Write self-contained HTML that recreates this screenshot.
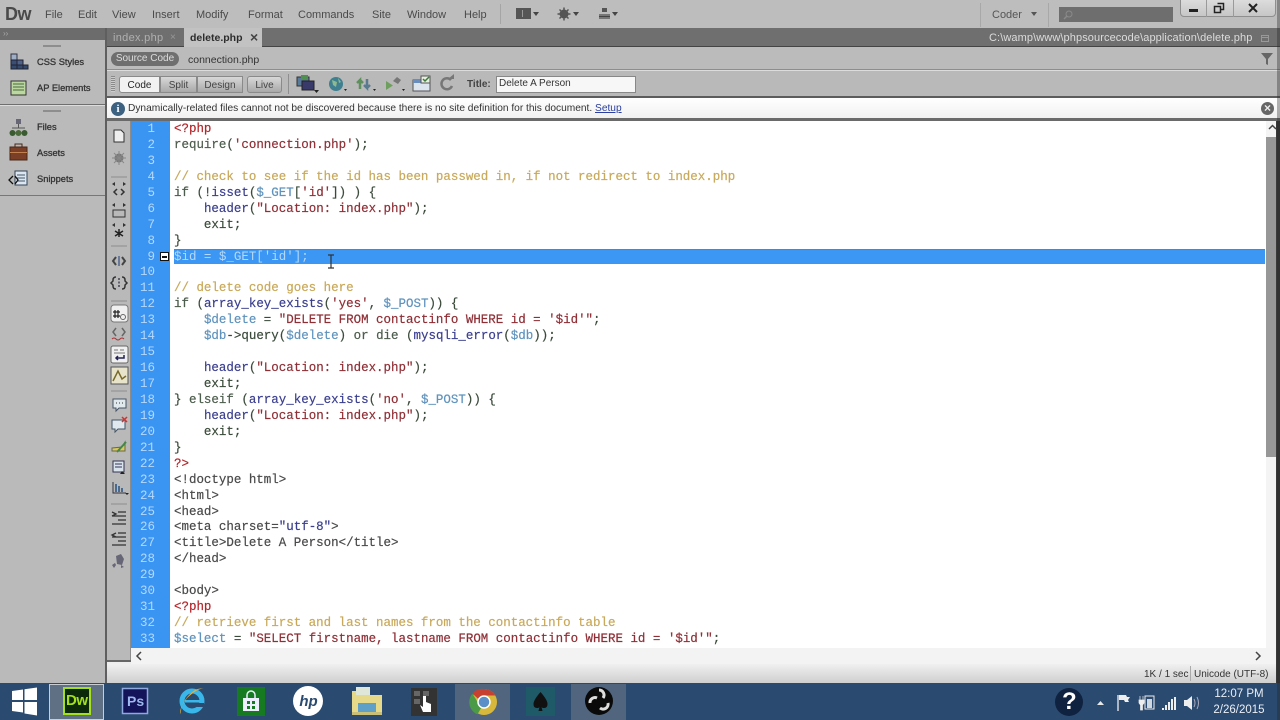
<!DOCTYPE html>
<html><head><meta charset="utf-8"><title>Dreamweaver</title>
<style>
html,body{margin:0;padding:0;width:1280px;height:720px;overflow:hidden;background:#bcbcbc}
#w{position:relative;width:1280px;height:720px;overflow:hidden;font-family:"Liberation Sans",sans-serif;font-size:11px;color:#333;filter:blur(.35px)}
#w div,#w span.a,#w svg{position:absolute}
.m{top:8px;font-size:11px;color:#4a4a4a;line-height:14px;white-space:nowrap}
.p{left:37px;font-size:9.300px;color:#333;line-height:12px;white-space:nowrap;-webkit-text-stroke:.3px #333}
#code{left:174px;top:122px;font:12.48px/15.94px "Liberation Mono",monospace;white-space:pre;color:#3a4a3a;-webkit-text-stroke:.2px}
#nums{left:131px;top:122px;width:24px;text-align:right;font:12.48px/15.94px "Liberation Mono",monospace;color:#b5d8fb;white-space:pre}
.c{color:#c9a95a}.s{color:#8f2f36}.f{color:#3b3f8f}.v{color:#5f93bd}.r{color:#b3262b}.t{color:#4a4a4a}.k{color:#4d5d4d}
.b{top:76px;height:17px;line-height:17px;text-align:center;font-size:10px;color:#444;background:linear-gradient(#d8d8d8,#a9a9a9);border:1px solid #8a8a8a;box-sizing:border-box}
</style></head><body><div id="w">

<!-- title bar -->
<div style="left:0;top:0;width:1280px;height:28px;background:#bdbdbd"></div>
<div style="left:5px;top:2px;font-size:18px;font-weight:bold;color:#4a4a4a;line-height:24px;letter-spacing:-.5px">Dw</div>
<div class="m" style="left:45px">File</div><div class="m" style="left:78px">Edit</div><div class="m" style="left:112px">View</div>
<div class="m" style="left:152px">Insert</div><div class="m" style="left:196px">Modify</div><div class="m" style="left:248px">Format</div>
<div class="m" style="left:298px">Commands</div><div class="m" style="left:372px">Site</div><div class="m" style="left:407px">Window</div><div class="m" style="left:464px">Help</div>
<div style="left:500px;top:4px;width:1px;height:20px;background:#a5a5a5"></div>
<svg style="left:514px;top:6px" width="110" height="16" viewBox="0 0 110 16">
<rect x="2" y="2" width="15" height="11" fill="#555"/><rect x="8" y="4" width="1" height="7" fill="#999"/>
<path d="M19 6h6l-3 4z" fill="#444"/>
<circle cx="50" cy="8" r="4.500" fill="#555"/><circle cx="50" cy="8" r="1.700" fill="#bbb"/><path d="M50 1.500v13M43.500 8h13M45.500 3.500l9 9M54.500 3.500l-9 9" stroke="#555" stroke-width="1.500"/>
<path d="M59 6h6l-3 4z" fill="#444"/>
<rect x="88" y="2" width="5" height="4" fill="#555"/><path d="M85 8h11v5H85z" fill="#777"/><path d="M85 10.500h11" stroke="#444"/>
<path d="M98 6h6l-3 4z" fill="#444"/>
</svg>
<div style="left:980px;top:3px;width:1px;height:24px;background:#a8a8a8"></div>
<div style="left:1048px;top:3px;width:1px;height:24px;background:#a8a8a8"></div>
<div class="m" style="left:992px;color:#555">Coder</div>
<svg style="left:1030px;top:11px" width="8" height="6"><path d="M1 1h6L4 5z" fill="#555"/></svg>
<div style="left:1059px;top:7px;width:114px;height:15px;background:#6e6e6e"></div>
<svg style="left:1062px;top:9px" width="12" height="12"><circle cx="7" cy="5" r="3" fill="none" stroke="#8a8a8a"/><path d="M5 7l-3 3" stroke="#8a8a8a" stroke-width="1.500"/></svg>
<div style="left:1180px;top:-1px;width:96px;height:18px;background:linear-gradient(#dcdcdc,#c6c6c6);border:1px solid #8f8f8f;border-radius:0 0 4px 4px;box-sizing:border-box"></div>
<div style="left:1206px;top:0;width:1px;height:17px;background:#9a9a9a"></div>
<div style="left:1233px;top:0;width:1px;height:17px;background:#9a9a9a"></div>
<svg style="left:1180px;top:0" width="96" height="17">
<rect x="9" y="9" width="9" height="3" fill="#222"/>
<path d="M34.500 6.500h6v6h-6zM37.500 3.500h6v6h-3" fill="none" stroke="#222" stroke-width="1.500"/>
<path d="M69 4l8 8M77 4l-8 8" stroke="#222" stroke-width="2"/>
</svg>

<!-- left panel -->
<div style="left:0;top:28px;width:106px;height:655px;background:#bababa"></div>
<div style="left:0;top:28px;width:105px;height:12px;background:#6c6c6c"></div>
<div style="left:3px;top:29px;font-size:8px;line-height:9px;color:#aaa">››</div>
<div style="left:43px;top:45px;width:18px;height:2px;background:#8d8d8d"></div>
<div style="left:43px;top:110px;width:18px;height:2px;background:#8d8d8d"></div>
<div style="left:0;top:104px;width:105px;height:1px;background:#6f6f6f"></div>
<div style="left:0;top:105px;width:105px;height:1px;background:#ddd"></div>
<div style="left:0;top:195px;width:105px;height:1px;background:#777"></div>
<div class="p" style="top:56px">CSS Styles</div><div class="p" style="top:82px">AP Elements</div>
<div class="p" style="top:121px">Files</div><div class="p" style="top:147px">Assets</div><div class="p" style="top:173px">Snippets</div>
<svg style="left:8px;top:51px" width="22" height="140" viewBox="0 0 22 140">
<rect x="3" y="3" width="6" height="6" fill="#9fb0c6" stroke="#334"/><rect x="3" y="9" width="6" height="5" fill="#3a4f74" stroke="#223"/><rect x="9" y="9" width="6" height="5" fill="#4d6388" stroke="#223"/><rect x="3" y="14" width="6" height="4" fill="#334a6c" stroke="#223"/><rect x="9" y="14" width="6" height="4" fill="#334a6c" stroke="#223"/><rect x="15" y="14" width="5" height="4" fill="#334a6c" stroke="#223"/>
<rect x="3" y="30" width="15" height="14" fill="#bcd8a0" stroke="#333"/><path d="M5 33h11M5 36h11M5 39h11" stroke="#4a6a40"/>
<rect x="8" y="68" width="5" height="5" fill="#667"/><path d="M10.500 73v4M4 77h13" stroke="#555"/><circle cx="4.500" cy="82" r="3" fill="#3a5a30"/><circle cx="10.500" cy="82" r="3" fill="#4a6a3a"/><circle cx="16.500" cy="82" r="3" fill="#3a5a30"/>
<rect x="2" y="96" width="17" height="13" fill="#7b3f28" stroke="#4a2818"/><rect x="7" y="93" width="7" height="3" fill="none" stroke="#4a2818"/><rect x="2" y="101" width="17" height="1" fill="#c08050"/>
<rect x="7" y="120" width="12" height="14" fill="#dce6f2" stroke="#345"/><path d="M9 124h8M9 127h8M9 130h8" stroke="#456"/><path d="M5 125l-4 4 4 4M7 125l3 4-3 4" fill="none" stroke="#111" stroke-width="1.300"/>
</svg>
<div style="left:105px;top:28px;width:2px;height:655px;background:#5f5f5f"></div>

<!-- tabs bar -->
<div style="left:107px;top:28px;width:1173px;height:19px;background:#6f6f6f;border-bottom:1px solid #444;box-sizing:border-box"></div>
<div style="left:113px;top:31px;font-size:11px;line-height:14px;color:#b0b0b0;letter-spacing:.3px">index.php</div>
<div style="left:170px;top:31px;font-size:10px;line-height:14px;color:#999">×</div>
<div style="left:184px;top:28px;width:78px;height:19px;background:#c2c2c2"></div>
<div style="left:190px;top:31px;font-size:10.500px;line-height:14px;color:#2c2c2c;font-weight:bold">delete.php</div>
<div style="left:250px;top:30px;font-size:14px;line-height:14px;color:#444;font-weight:bold">×</div>
<div style="left:989px;top:31px;font-size:11px;line-height:14px;color:#dcdcdc;white-space:nowrap;letter-spacing:.1px">C:\wamp\www\phpsourcecode\application\delete.php</div>
<svg style="left:1259px;top:32px" width="12" height="12"><rect x="2.500" y="3.500" width="7" height="6" fill="none" stroke="#999"/><path d="M2 5.500h8" stroke="#999"/></svg>

<!-- related files row -->
<div style="left:107px;top:47px;width:1173px;height:23px;background:#bbb"></div>
<div style="left:107px;top:69px;width:1173px;height:1px;background:#8d8d8d"></div>
<div style="left:107px;top:70px;width:1173px;height:1px;background:#dcdcdc"></div>
<div style="left:111px;top:52px;width:68px;height:14px;border-radius:7px;background:#6f6f6f;color:#ddd;font-size:10px;line-height:14px;text-align:center">Source Code</div>
<div style="left:188px;top:53px;font-size:10.500px;line-height:14px;color:#333">connection.php</div>
<svg style="left:1260px;top:52px" width="14" height="14"><path d="M1 1h12L8 7v6L6 12V7z" fill="#666"/></svg>

<!-- toolbar -->
<div style="left:107px;top:71px;width:1173px;height:26px;background:#b9b9b9"></div>
<div style="left:107px;top:96px;width:1173px;height:2px;background:#5c5c5c"></div>
<div style="left:111px;top:76px;width:4px;height:16px;background:repeating-linear-gradient(#8a8a8a 0 1px,#ccc 1px 2px)"></div>
<div class="b" style="left:119px;width:41px;background:#f2f2f2;color:#222;border-radius:3px 0 0 3px">Code</div>
<div class="b" style="left:160px;width:37px;">Split</div>
<div class="b" style="left:197px;width:46px;">Design</div>
<div class="b" style="left:247px;width:35px;border-radius:3px">Live</div>
<div style="left:288px;top:74px;width:1px;height:20px;background:#8f8f8f"></div>
<svg style="left:294px;top:73px" width="170" height="22" viewBox="0 0 170 22">
<rect x="3" y="4" width="12" height="9" fill="#5a7a9a" stroke="#333"/><rect x="8" y="8" width="12" height="9" fill="#3a3a6a" stroke="#222"/><rect x="7" y="2" width="7" height="5" fill="#4f8f4f"/><path d="M20 17h5l-2.500 3z" fill="#222"/>
<circle cx="42" cy="11" r="7" fill="#3f7f8f"/><path d="M38 7l5 2-1 5-3-2zM44 5l3 4-2 1z" fill="#8fb98f"/><path d="M50 16h3l-1.500 2z" fill="#222"/>
<path d="M66 16V7l-3 3M66 7l3 3" stroke="#5f8f5f" stroke-width="2.500" fill="none"/><path d="M73 6v9l-3-3M73 15l3-3" stroke="#5a7a8f" stroke-width="2.500" fill="none"/><path d="M79 16h3l-1.500 2z" fill="#222"/>
<path d="M92 8v9l7-4.500z" fill="#6f9f5f"/><path d="M99 8l4-4 4 3-3 4z" fill="#777"/><path d="M108 16h3l-1.500 2z" fill="#222"/>
<rect x="119" y="7" width="17" height="11" fill="#dce4ee" stroke="#555"/><rect x="119" y="7" width="17" height="3" fill="#6a8fbf"/><rect x="127" y="3" width="9" height="7" fill="#e8eee0" stroke="#555"/><path d="M129 6l2 2 4-4" stroke="#3a7a3a" fill="none" stroke-width="1.500"/>
<path d="M157 7a5.500 5.500 0 1 0 1 6" fill="none" stroke="#777" stroke-width="2.500"/><path d="M154 6h6V1z" fill="#777"/>
</svg>
<div style="left:467px;top:78px;font-size:10px;font-weight:bold;line-height:14px;color:#444">Title:</div>
<div style="left:496px;top:76px;width:140px;height:17px;background:#f7f7f7;border:1px solid #888;box-sizing:border-box;font-size:10px;line-height:14px;padding:0 0 0 2px;color:#333">Delete A Person</div>

<!-- info bar -->
<div style="left:107px;top:98px;width:1173px;height:21px;background:linear-gradient(#fff,#f0f0f0)"></div>
<div style="left:107px;top:118px;width:1173px;height:3px;background:#6a6a6a"></div>
<div style="left:111px;top:102px;width:14px;height:14px;border-radius:7px;background:#3d6180;color:#fff;font:bold 11px/14px 'Liberation Serif',serif;text-align:center">i</div>
<div style="left:128px;top:102px;font-size:10.190px;line-height:13px;color:#333;white-space:nowrap">Dynamically-related files cannot not be discovered because there is no site definition for this document. <span style="color:#2a3fa0;text-decoration:underline">Setup</span></div>
<div style="left:1261px;top:102px;width:13px;height:13px;border-radius:7px;background:#666;color:#eee;font:bold 12px/13px 'Liberation Sans',sans-serif;text-align:center">×</div>

<!-- code view column -->
<div style="left:107px;top:121px;width:24px;height:539px;background:#b9b9b9"></div>
<div style="left:107px;top:660px;width:24px;height:2px;background:#666"></div>
<div style="left:130px;top:121px;width:1px;height:539px;background:#8c8c8c"></div>
<svg style="left:107px;top:124px" width="24" height="450" viewBox="0 0 24 450">
<path d="M7 6h7l3 3v9H7z" fill="#eee" stroke="#333"/>
<circle cx="12" cy="34" r="4.500" fill="#777"/><path d="M12 27v14M5 34h14M7 29l10 10M17 29L7 39" stroke="#888"/>
<path d="M4 53h16" stroke="#8d8d8d"/>
<g transform="translate(0 -2)"><path d="M5 62l3-2v4zM19 62l-3-2v4z" fill="#333"/><path d="M10 67l-3 3 3 3M14 67l3 3-3 3" fill="none" stroke="#333" stroke-width="1.500"/></g>
<path d="M5 81l3-2v4zM19 81l-3-2v4z" fill="#333"/><rect x="6" y="86" width="12" height="7" fill="none" stroke="#333"/>
<path d="M5 101l3-2v4zM19 101l-3-2v4z" fill="#333"/><path d="M12 105v8M8 107l8 5M16 107l-8 5" stroke="#222" stroke-width="1.500"/>
<path d="M4 122h16" stroke="#8d8d8d"/>
<g transform="translate(0 3)"><path d="M9 130l-3 4 3 4M15 130l3 4-3 4" fill="none" stroke="#444" stroke-width="2"/><path d="M12 129v10" stroke="#6a7a9a" stroke-width="2"/></g>
<path d="M9 153q-3 0-3 3v1l-2 2 2 2v1q0 3 3 3M15 153q3 0 3 3v1l2 2-2 2v1q0 3-3 3" fill="none" stroke="#333" stroke-width="1.500"/><path d="M12 154v10" stroke="#445" stroke-dasharray="2 1.500" stroke-width="1.500"/>
<path d="M4 177h16" stroke="#8d8d8d"/>
<rect x="4" y="181" width="17" height="17" rx="3" fill="#f0f0f0" stroke="#777"/><path d="M8 186v8M11 186v8M6 188h7M6 192h7" stroke="#222" stroke-width="1.200"/><circle cx="16" cy="193" r="2.500" fill="none" stroke="#666"/>
<path d="M9 204l-3 4 3 4M15 204l3 4-3 4" fill="none" stroke="#666" stroke-width="1.500"/><path d="M5 215q2-2 4 0t4 0 4 0" fill="none" stroke="#a33"/>
<rect x="4" y="222" width="17" height="17" rx="2" fill="#f0f0f0" stroke="#666"/><path d="M7 226h4M13 226h4M7 229h11" stroke="#777"/><path d="M17 231v3h-8m2-2l-2 2 2 2" fill="none" stroke="#225" stroke-width="1.500"/>
<rect x="4" y="243" width="17" height="17" fill="#e8e4cc" stroke="#555"/><path d="M6 257l5-10 4 8 4-3" fill="none" stroke="#776a2a" stroke-width="1.500"/>
<path d="M4 267h16" stroke="#8d8d8d"/>
<path d="M6 275h13v9h-7l-3 3v-3H6z" fill="#dfe9ee" stroke="#456"/><path d="M9 279h1M12 279h1M15 279h1" stroke="#333"/>
<path d="M5 296h13v9h-7l-3 3v-3H5z" fill="#dfe9ee" stroke="#456"/><path d="M15 293l5 5M20 293l-5 5" stroke="#c33" stroke-width="1.500"/>
<g transform="translate(0 6)"><path d="M5 318l10-1 3-5v9H5z" fill="#d9c95a" stroke="#665"/><path d="M10 322l9-10" stroke="#484" stroke-width="2"/></g>
<g transform="translate(0 2)"><rect x="6" y="335" width="11" height="11" fill="#d9e3ee" stroke="#335"/><path d="M8 338h7M8 341h7" stroke="#335"/><path d="M15 345l3 3h-5z" fill="#222"/></g>
<path d="M6 358v11h13" fill="none" stroke="#334"/><path d="M9 368v-8M12 368v-6M15 368v-4" stroke="#4a6a8f" stroke-width="2"/><path d="M18 369h4l-2 2z" fill="#222"/>
<path d="M4 380h16" stroke="#8d8d8d"/>
<g transform="translate(0 1)"><path d="M5 391h14M11 387h8M11 395h8M5 399h14M5 387l4 2-4 2" stroke="#333" fill="none" stroke-width="1.300"/>
<path d="M5 412h14M11 408h8M11 416h8M5 420h14M9 408l-4 2 4 2" stroke="#333" fill="none" stroke-width="1.300"/></g>
<path d="M9 432l5-2 3 5-2 6-5-1zM5 441l3-2 1 2-2 3zM14 441l3 2-3 1z" fill="#667"/>
</svg>

<!-- editor -->
<div style="left:131px;top:121px;width:1149px;height:527px;background:#fff"></div>
<div style="left:131px;top:121px;width:39px;height:527px;background:#3a94f2"></div>
<div style="left:174px;top:249px;width:1091px;height:15px;background:#3b97f3;border-top:1px solid #5585b5;box-sizing:border-box"></div>
<div id="nums">1
2
3
4
5
6
7
8
9
10
11
12
13
14
15
16
17
18
19
20
21
22
23
24
25
26
27
28
29
30
31
32
33</div>
<div style="left:160px;top:252px;width:9px;height:9px;background:#fff;border:1.500px solid #111;box-sizing:border-box"></div>
<div style="left:162px;top:255.500px;width:5px;height:2px;background:#111"></div>
<div id="code"><span class="r">&lt;?php</span>
<span class="k">require</span>(<span class="s">'connection.php'</span>);

<span class="c">// check to see if the id has been passwed in, if not redirect to index.php</span>
<span class="k">if</span> (!<span class="f">isset</span>(<span class="v">$_GET</span>[<span class="s">'id'</span>]) ) {
    <span class="f">header</span>(<span class="s">"Location: index.php"</span>);
    exit;
}
<span style="color:#b5d8fb;-webkit-text-stroke:0">$id = $_GET['id'];</span>

<span class="c">// delete code goes here</span>
<span class="k">if</span> (<span class="f">array_key_exists</span>(<span class="s">'yes'</span>, <span class="v">$_POST</span>)) {
    <span class="v">$delete</span> = <span class="s">"DELETE FROM contactinfo WHERE id = '$id'"</span>;
    <span class="v">$db</span>-&gt;query(<span class="v">$delete</span>) <span class="k">or die</span> (<span class="f">mysqli_error</span>(<span class="v">$db</span>));

    <span class="f">header</span>(<span class="s">"Location: index.php"</span>);
    exit;
} <span class="k">elseif</span> (<span class="f">array_key_exists</span>(<span class="s">'no'</span>, <span class="v">$_POST</span>)) {
    <span class="f">header</span>(<span class="s">"Location: index.php"</span>);
    exit;
}
<span class="r">?&gt;</span>
<span class="t">&lt;!doctype html&gt;</span>
<span class="t">&lt;html&gt;</span>
<span class="t">&lt;head&gt;</span>
<span class="t">&lt;meta charset=</span><span class="f">"utf-8"</span><span class="t">&gt;</span>
<span class="t">&lt;title&gt;Delete A Person&lt;/title&gt;</span>
<span class="t">&lt;/head&gt;</span>

<span class="t">&lt;body&gt;</span>
<span class="r">&lt;?php</span>
<span class="c">// retrieve first and last names from the contactinfo table</span>
<span class="v">$select</span> = <span class="s">"SELECT firstname, lastname FROM contactinfo WHERE id = '$id'"</span>;</div>
<svg style="left:326px;top:254px" width="10" height="15"><path d="M2 1h6M5 1v13M2 14h6" stroke="#333" stroke-width="1.200" fill="none"/></svg>

<!-- scrollbars -->
<div style="left:1266px;top:121px;width:14px;height:527px;background:#f4f4f4"></div>
<div style="left:1266px;top:137px;width:10px;height:320px;background:#979797"></div>
<div style="left:1276px;top:121px;width:4px;height:562px;background:#3a3a3a"></div>
<svg style="left:1268px;top:124px" width="9" height="7"><path d="M1 5l3.500-3.500L8 5" fill="none" stroke="#444" stroke-width="1.500"/></svg>
<div style="left:131px;top:648px;width:1145px;height:16px;background:#f3f3f3"></div>
<svg style="left:135px;top:651px" width="8" height="10"><path d="M6 1L2 5l4 4" fill="none" stroke="#444" stroke-width="1.500"/></svg>
<svg style="left:1254px;top:651px" width="8" height="10"><path d="M2 1l4 4-4 4" fill="none" stroke="#444" stroke-width="1.500"/></svg>

<!-- status bar -->
<div style="left:107px;top:662px;width:24px;height:3px;background:#eee"></div>
<div style="left:107px;top:664px;width:1169px;height:19px;background:linear-gradient(#f0f0f0,#cfcfcf)"></div>
<div style="left:1144px;top:668px;font-size:10px;line-height:13px;color:#333;white-space:nowrap">1K / 1 sec</div>
<div style="left:1190px;top:666px;width:1px;height:15px;background:#aaa"></div>
<div style="left:1194px;top:668px;font-size:10px;line-height:13px;color:#333;white-space:nowrap">Unicode (UTF-8)</div>

<!-- taskbar -->
<div style="left:0;top:683px;width:1280px;height:37px;background:#2b4a6f"></div>
<div style="left:49px;top:684px;width:55px;height:36px;background:#5f7084;border:1px solid #c9ced4;box-sizing:border-box"></div>
<div style="left:455px;top:684px;width:55px;height:36px;background:#51667e"></div>
<div style="left:571px;top:684px;width:55px;height:36px;background:#51667e"></div>
<svg style="left:0;top:683px" width="640" height="37" viewBox="0 0 640 37">
<path d="M12 8l11-1.500V17H12zM24.500 6.300L37 4.500V17H24.500zM12 19h11v10.500L12 28zM24.500 19H37v13.500l-12.500-2z" fill="#fff"/>
<rect x="64" y="5" width="26" height="26" fill="#0c2a0a" stroke="#a4e020" stroke-width="2"/>
<rect x="122.500" y="5.500" width="25" height="25" fill="#14145a" stroke="#8fa8e0" stroke-width="1.500"/>
<circle cx="192" cy="18" r="10" fill="none" stroke="#39b7ea" stroke-width="5"/><rect x="185" y="17" width="15" height="2.500" fill="#39b7ea"/><rect x="196" y="20" width="8" height="4" fill="#2b4a6f"/><path d="M181 31q-3-4 6-16 12-11 17-9-7-2-14 5-10 10-9 20z" fill="#e0b040"/>
<rect x="237" y="4" width="28" height="29" fill="#157a20"/><path d="M243 15h16v13h-16z" fill="#eef"/><path d="M247 15v-3a4 4 0 0 1 8 0v3" fill="none" stroke="#eef" stroke-width="1.500"/><path d="M250 18h-3v3h3zM255 18h-3v3h3zM250 23h-3v3h3zM255 23h-3v3h3z" fill="#157a20"/>
<circle cx="308" cy="18" r="15" fill="#fff"/>
<path d="M352 8h12l3 4h15v20h-30z" fill="#e6d98a"/><rect x="356" y="4" width="14" height="8" fill="#dfe8d8"/><rect x="358" y="20" width="18" height="9" fill="#5ea0c8"/><rect x="352" y="29" width="30" height="3" fill="#c9bf78"/>
<rect x="411" y="5" width="26" height="28" fill="#333"/><rect x="414" y="8" width="6" height="5" fill="#666"/><rect x="423" y="8" width="6" height="5" fill="#666"/><rect x="414" y="16" width="6" height="5" fill="#666"/><path d="M423 13v11l-3-2 3 7h8v-8l-5-2v-6z" fill="#fff"/>
<circle cx="484" cy="19" r="13" fill="#d8b83a"/><path d="M484 6a13 13 0 0 1 11.300 6.500H484a6 6 0 0 0-5.500 3.600l-6-5.500A13 13 0 0 1 484 6z" fill="#c8402f"/><path d="M472.500 10.600l6 10a6 6 0 0 0 3 3.700l-4 7A13 13 0 0 1 472.500 10.600z" fill="#4a9a48"/><circle cx="484" cy="19" r="6" fill="#5a8fc8" stroke="#fff" stroke-width="1.500"/>
<rect x="526" y="4" width="29" height="29" fill="#1f5a68"/><path d="M540.500 9q7 8 7 12 0 4-3.500 4-2 0-2.500-1l1 4h-4l1-4q-.5 1-2.500 1-3.500 0-3.500-4 0-4 7-12z" fill="#111"/>
<circle cx="599" cy="18" r="14" fill="#0a0a0a"/><path d="M599 7a5 5 0 0 1 4 8M590 20a5 5 0 0 1 7-5M608 20a5 5 0 0 1-8 5" fill="none" stroke="#ddd" stroke-width="3"/>
</svg>
<div style="left:294px;top:691px;width:29px;text-align:center;font:italic bold 15px/22px 'Liberation Sans',sans-serif;color:#2b4a6f">hp</div>
<div style="left:127px;top:691px;font:bold 14px/20px 'Liberation Sans',sans-serif;color:#9db8ee">Ps</div>
<div style="left:66px;top:691px;font:bold 15px/20px 'Liberation Sans',sans-serif;color:#a4e020;letter-spacing:-.5px">Dw</div>
<svg style="left:1050px;top:683px" width="160" height="37" viewBox="0 0 160 37">
<circle cx="19" cy="19" r="14" fill="#0f2240"/>
<path d="M47 22l3.500-4 3.500 4z" fill="#e8e8e8"/>
<path d="M68 12v16" stroke="#eee" stroke-width="1.300"/><path d="M69 12h7l1 2h3l-2 3 1 2h-4l-1-2h-5z" fill="#eee"/>
<rect x="95" y="13" width="9" height="13" fill="#2b4a6f" stroke="#eee"/><rect x="97" y="16" width="5" height="9" fill="#cfd8e0"/><path d="M90 13v4M93 13v4M89 17h5v3l-1.500 2v5h-2v-5l-1.500-2z" fill="#eee" stroke="#eee" stroke-width=".7"/>
<path d="M112 27h2v-2h-2zM115 27h2v-5h-2zM118 27h2v-8h-2zM121 27h2v-11h-2zM124 27h2v-13h-2z" fill="#eee"/>
<path d="M134 17h3l5-4v14l-5-4h-3z" fill="#eee"/><path d="M144 16q2 4 0 8M147 14q3 6 0 12" stroke="#aab" fill="none"/>
</svg>
<div style="left:1062px;top:689px;width:14px;text-align:center;font:bold 24px/26px 'Liberation Sans',sans-serif;color:#fff">?</div>
<div style="left:1210px;top:686px;width:58px;text-align:center;font-size:11.500px;line-height:16px;color:#eaeff5;white-space:nowrap">12:07 PM</div>
<div style="left:1210px;top:702px;width:58px;text-align:center;font-size:11.500px;line-height:16px;color:#eaeff5;white-space:nowrap">2/26/2015</div>
<div style="left:1277px;top:0;width:3px;height:720px;background:#222;opacity:.35"></div>
</div></body></html>
